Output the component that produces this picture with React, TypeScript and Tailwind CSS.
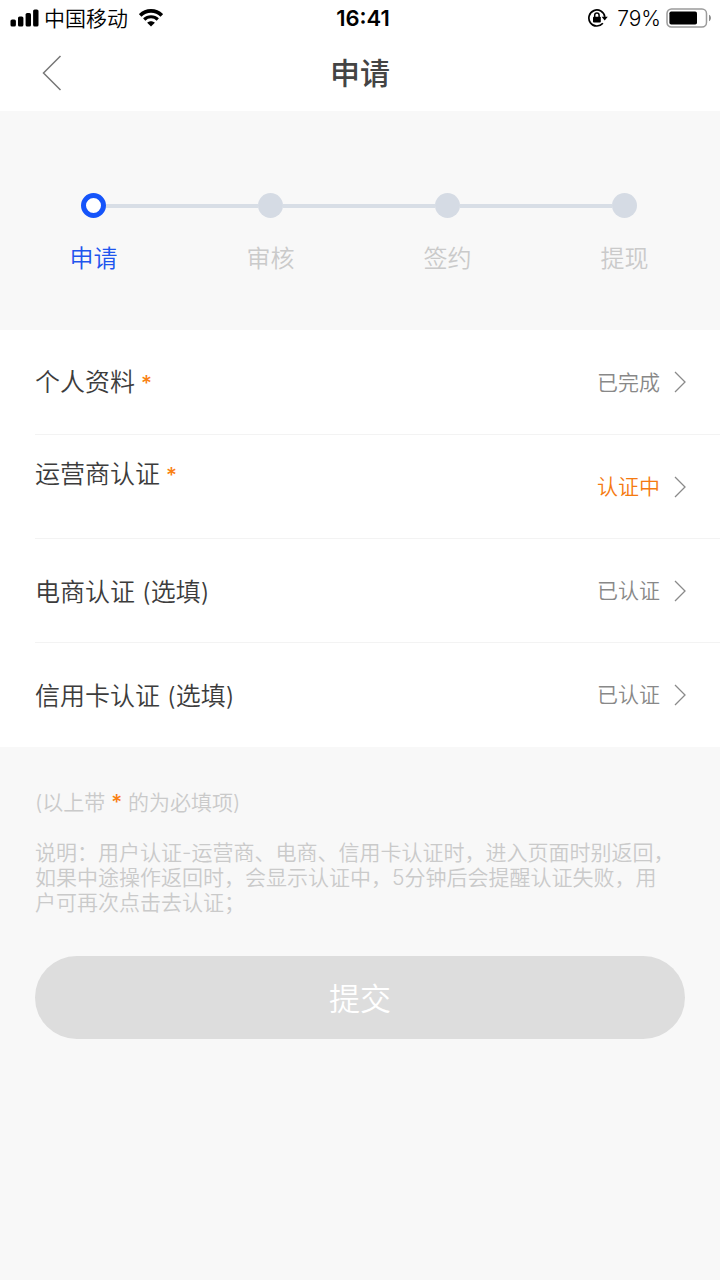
type Status = 'done' | 'pending'

const steps = [
  { label: '申请', active: true },
  { label: '审核', active: false },
  { label: '签约', active: false },
  { label: '提现', active: false },
]

const items: { label: string; required?: boolean; raised?: boolean; status: string; kind: Status }[] = [
  { label: '个人资料', required: true, status: '已完成', kind: 'done' },
  { label: '运营商认证', required: true, raised: true, status: '认证中', kind: 'pending' },
  { label: '电商认证 (选填)', status: '已认证', kind: 'done' },
  { label: '信用卡认证 (选填)', status: '已认证', kind: 'done' },
]

function SignalIcon() {
  return (
    <svg width="29" height="18" viewBox="0 0 29 18" aria-hidden="true">
      <rect x="0.5" y="10.5" width="5.4" height="7" rx="1.6" />
      <rect x="8" y="7.5" width="5.4" height="10" rx="1.6" />
      <rect x="15.6" y="4" width="5.4" height="13.5" rx="1.6" />
      <rect x="23.1" y="0.5" width="5.4" height="17" rx="1.6" />
    </svg>
  )
}

function WifiIcon() {
  return (
    <svg width="24" height="18" viewBox="0 0 24 18" aria-hidden="true">
      <path d="M1.2 6.4C7.2 0.4 16.8 0.4 22.8 6.4" fill="none" stroke="black" strokeWidth="3.6" />
      <path d="M5.2 10.5C9 6.8 15 6.8 18.8 10.5" fill="none" stroke="black" strokeWidth="3.2" />
      <path d="M8.2 13.7C10.3 11.7 13.7 11.7 15.8 13.7L12 17.5Z" />
    </svg>
  )
}

function RotationLockIcon() {
  return (
    <svg width="20" height="18" viewBox="0 0 20 18" aria-hidden="true">
      <path d="M14.9 14.3A8 8 0 1 1 16.8 7.8" fill="none" stroke="black" strokeWidth="1.7" />
      <path d="M13.6 7.8H19.8L16.7 11.4Z" />
      <rect x="5" y="7.8" width="7.8" height="5.8" rx="0.8" />
      <path d="M6.7 8.4V6.2a2.2 2.2 0 0 1 4.4 0V8.4" fill="none" stroke="black" strokeWidth="1.5" />
    </svg>
  )
}

function BatteryIcon() {
  return (
    <svg width="46" height="20" viewBox="0 0 46 20" aria-hidden="true">
      <rect x="1" y="1" width="39.5" height="18" rx="4.5" fill="white" stroke="#9b9b9b" strokeWidth="1.5" />
      <rect x="3.4" y="3.4" width="27.6" height="13.2" rx="1.8" />
      <path d="M43 6.8C45.6 7.8 45.6 12.2 43 13.2Z" fill="#8c8c8c" />
    </svg>
  )
}

function StatusBar() {
  return (
    <div className="grid h-9 grid-cols-3 items-center pr-2 pl-2.5 text-black">
      <div className="flex items-center">
        <SignalIcon />
        <span className="ml-[5px] pt-0.5 text-[21px] leading-6">中国移动</span>
        <span className="ml-[11px]">
          <WifiIcon />
        </span>
      </div>
      <span className="pl-1 text-center text-[22px] leading-6 font-semibold">16:41</span>
      <div className="flex items-center justify-end">
        <RotationLockIcon />
        <span className="mr-[5px] ml-[9px] pt-0.5 text-[21px] leading-6">79%</span>
        <BatteryIcon />
      </div>
    </div>
  )
}

function NavBar() {
  return (
    <header className="grid h-[75px] grid-cols-[80px_1fr_80px] items-center pb-0.5">
      <button type="button" aria-label="返回" className="flex h-full items-center justify-center pl-6">
        <svg width="20" height="36" viewBox="0 0 20 36" fill="none" stroke="#777" strokeWidth="1.5" aria-hidden="true">
          <path d="M18.5 1L1.5 18L18.5 35" />
        </svg>
      </button>
      <h1 className="text-center text-[30px] leading-9 font-medium text-[#444]">申请</h1>
    </header>
  )
}

function Steps() {
  return (
    <ol className="grid grid-cols-4 pt-[82px] pr-[7px] pb-[56px] pl-[5px]">
      {steps.map((step, i) => (
        <li key={step.label} className="flex flex-col items-center">
          <div className="flex w-full items-center">
            <span className={i > 0 ? 'h-1 flex-1 bg-[#d8dee6]' : 'h-1 flex-1'} />
            <span
              className={
                step.active
                  ? 'size-[25px] rounded-full border-[5px] border-[#1554fa] bg-white'
                  : 'size-[25px] rounded-full bg-[#d5dbe4]'
              }
            />
            <span className={i < steps.length - 1 ? 'h-1 flex-1 bg-[#d8dee6]' : 'h-1 flex-1'} />
          </div>
          <span
            className={
              step.active
                ? 'mt-[26px] text-[24px] leading-[30px] text-[#1f55ee]'
                : 'mt-[26px] text-[24px] leading-[30px] text-[#cacaca]'
            }
          >
            {step.label}
          </span>
        </li>
      ))}
    </ol>
  )
}

function ItemList() {
  return (
    <ul className="bg-white pb-px pl-[35px]">
      {items.map((item, i) => (
        <li key={item.label} className={i > 0 ? 'border-t border-[#f3f3f3]' : ''}>
          <a href="#" className={i > 0 ? 'flex h-[103px] items-center pr-[34px]' : 'flex h-[104px] items-center pr-[34px]'}>
            <span className={item.raised ? 'flex-1 pb-6 text-[25px] leading-8 text-[#3c3c3c]' : 'flex-1 pt-0.5 text-[25px] leading-8 text-[#3c3c3c]'}>
              {item.label}
              {item.required && <span className="ml-1.5 text-[21px] font-medium text-[#f98012]">*</span>}
            </span>
            <span className={item.kind === 'pending' ? 'pt-px text-[21px] text-[#f57a10]' : 'pt-px text-[21px] text-[#888]'}>
              {item.status}
            </span>
            <svg className="ml-[14px]" width="12" height="22" viewBox="0 0 12 22" fill="none" stroke="#8a8a8a" strokeWidth="1.3" aria-hidden="true">
              <path d="M1 1L11 11L1 21" />
            </svg>
          </a>
        </li>
      ))}
    </ul>
  )
}

export default function App() {
  return (
    <div className="min-h-screen bg-[#f8f8f8] font-['Inter','Noto_Sans_CJK_SC',sans-serif] font-[350]">
      <div className="bg-white">
        <StatusBar />
        <NavBar />
      </div>

      <main>
        <Steps />
        <ItemList />

        <div className="px-[35px] pt-[43px] text-[21px] leading-[25px] text-[#cacaca]">
          <p>
            (以上带 <span className="font-medium text-[#f98012]">*</span> 的为必填项)
          </p>
          <p className="mt-[25px] pr-2.5">
            说明：用户认证-运营商、电商、信用卡认证时，进入页面时别返回，如果中途操作返回时，会显示认证中，5分钟后会提醒认证失败，用户可再次点击去认证；
          </p>
          <button type="button" className="mt-[41px] h-[83px] w-full rounded-full bg-[#ddd] pt-0.5 text-[31px] leading-9 text-white">
            提交
          </button>
        </div>
      </main>
    </div>
  )
}
